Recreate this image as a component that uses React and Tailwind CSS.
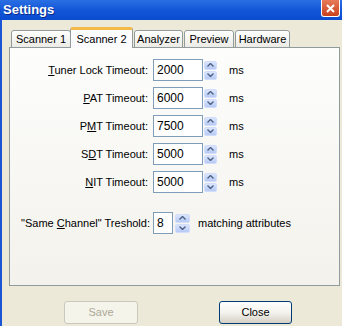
import React from "react";

function Spinner({ width = "w-[13px]" }) {
    return (
        <div className={`flex flex-col h-[19px] ${width} gap-px`}>
            <div className="flex-1 flex items-center justify-center rounded-[2px] border border-[#d2ddfb] bg-gradient-to-b from-[#dbe5fd] to-[#b7caf5]">
                <svg width="7" height="4" viewBox="0 0 7 4">
                    <path d="M0.5 3.5 L3.5 0.5 L6.5 3.5" fill="none" stroke="#4d6185" strokeWidth="1.4" />
                </svg>
            </div>
            <div className="flex-1 flex items-center justify-center rounded-[2px] border border-[#d2ddfb] bg-gradient-to-b from-[#dbe5fd] to-[#b7caf5]">
                <svg width="7" height="4" viewBox="0 0 7 4">
                    <path d="M0.5 0.5 L3.5 3.5 L6.5 0.5" fill="none" stroke="#4d6185" strokeWidth="1.4" />
                </svg>
            </div>
        </div>
    );
}

function TimeoutRow({ pre, key1, post, value }) {
    return (
        <div className="flex items-center h-[22px]">
            <div className="w-[138px] text-right">
                {pre}<span className="underline">{key1}</span>{post}
            </div>
            <div className="ml-[5px] w-[50px] h-[22px] border border-[#7f9db9] bg-white flex items-center pl-[3px] text-[12px]">
                {value}
            </div>
            <div className="ml-[1px]">
                <Spinner />
            </div>
            <div className="ml-[12px]">ms</div>
        </div>
    );
}

function Tab({ label, width, selected }) {
    if (selected) {
        return (
            <div className={`${width} h-[21px] -mx-[1px] relative z-20 rounded-t-[3px] border-x border-[#919b9c] border-t-[3px] border-t-[#f5b94a] bg-[#fcfcfe] flex items-start justify-center pt-[1px]`}>
                {label}
            </div>
        );
    }
    return (
        <div className={`${width} h-[18px] rounded-t-[3px] border border-[#919b9c] bg-gradient-to-b from-white to-[#ecebe5] flex items-center justify-center pt-[1px]`}>
            {label}
        </div>
    );
}

export default function App() {
    const rows = [
        { pre: "", key1: "T", post: "uner Lock Timeout:", value: "2000" },
        { pre: "", key1: "P", post: "AT Timeout:", value: "6000" },
        { pre: "P", key1: "M", post: "T Timeout:", value: "7500" },
        { pre: "S", key1: "D", post: "T Timeout:", value: "5000" },
        { pre: "", key1: "N", post: "IT Timeout:", value: "5000" },
    ];

    return (
        <div className="w-[342px] h-[326px] overflow-hidden bg-[#ece9d8] flex flex-col text-[11px] text-black font-['Liberation_Sans',Arial,sans-serif]">

            <div className="h-[20px] shrink-0 flex items-center justify-between bg-gradient-to-b from-[#2b6fe3] via-[#1356d8] to-[#0a4cd0]">
                <div className="pl-[3px] text-white font-bold text-[13px] [text-shadow:1px_1px_#0a2a8a]">
                    Settings
                </div>
                <div className="self-start w-[19px] h-[17px] mr-[2px] rounded-b-[3px] border border-t-0 border-white bg-gradient-to-b from-[#e77a5a] to-[#c8401a] flex items-center justify-center">
                    <svg width="9" height="9" viewBox="0 0 9 9">
                        <path d="M1 1 L8 8 M8 1 L1 8" stroke="white" strokeWidth="2" />
                    </svg>
                </div>
            </div>

            <div className="flex-1 flex flex-col border-l-2 border-[#1a55d4]">

                <div className="pl-[7px] pt-[8px]">
                    <div className="flex items-end pl-[2px] h-[20px] relative z-10">
                        <Tab label="Scanner 1" width="w-[60px]" />
                        <Tab label="Scanner 2" width="w-[63px]" selected />
                        <div className="w-[2px]" />
                        <Tab label="Analyzer" width="w-[49px]" />
                        <div className="w-[1px]" />
                        <Tab label="Preview" width="w-[50px]" />
                        <div className="w-[1px]" />
                        <Tab label="Hardware" width="w-[55px]" />
                    </div>

                    <div className="-mt-px w-[331px] h-[239px] border border-[#919b9c] bg-gradient-to-b from-[#fdfdfc] to-[#f3f2ec] pt-[11px] pl-[0px]">
                        <div className="flex flex-col gap-[6px]">
                            {rows.map((row) => (
                                <TimeoutRow
                                    key={row.post + row.pre}
                                    pre={row.pre}
                                    key1={row.key1}
                                    post={row.post}
                                    value={row.value}
                                />
                            ))}
                        </div>

                        <div className="flex items-center h-[22px] mt-[19px]">
                            <div className="w-[140px] text-right">
                                "Same <span className="underline">C</span>hannel" Treshold:
                            </div>
                            <div className="ml-[3px] w-[20px] h-[22px] border border-[#7f9db9] bg-white flex items-center pl-[3px] text-[12px]">
                                8
                            </div>
                            <div className="ml-[2px]">
                                <Spinner width="w-[15px]" />
                            </div>
                            <div className="ml-[8px]">matching attributes</div>
                        </div>
                    </div>
                </div>

                <div className="flex mt-[15px] pl-[62px] gap-[81px]">
                    <div className="w-[74px] h-[23px] rounded-[3px] border border-[#cac8bb] bg-[#f5f4ea] text-[#aca899] flex items-center justify-center">
                        Save
                    </div>
                    <div className="w-[73px] h-[23px] rounded-[3px] border border-[#003c74] bg-gradient-to-b from-white via-[#f4f3ee] to-[#d6d0c5] flex items-center justify-center">
                        Close
                    </div>
                </div>

            </div>
        </div>
    );
}
